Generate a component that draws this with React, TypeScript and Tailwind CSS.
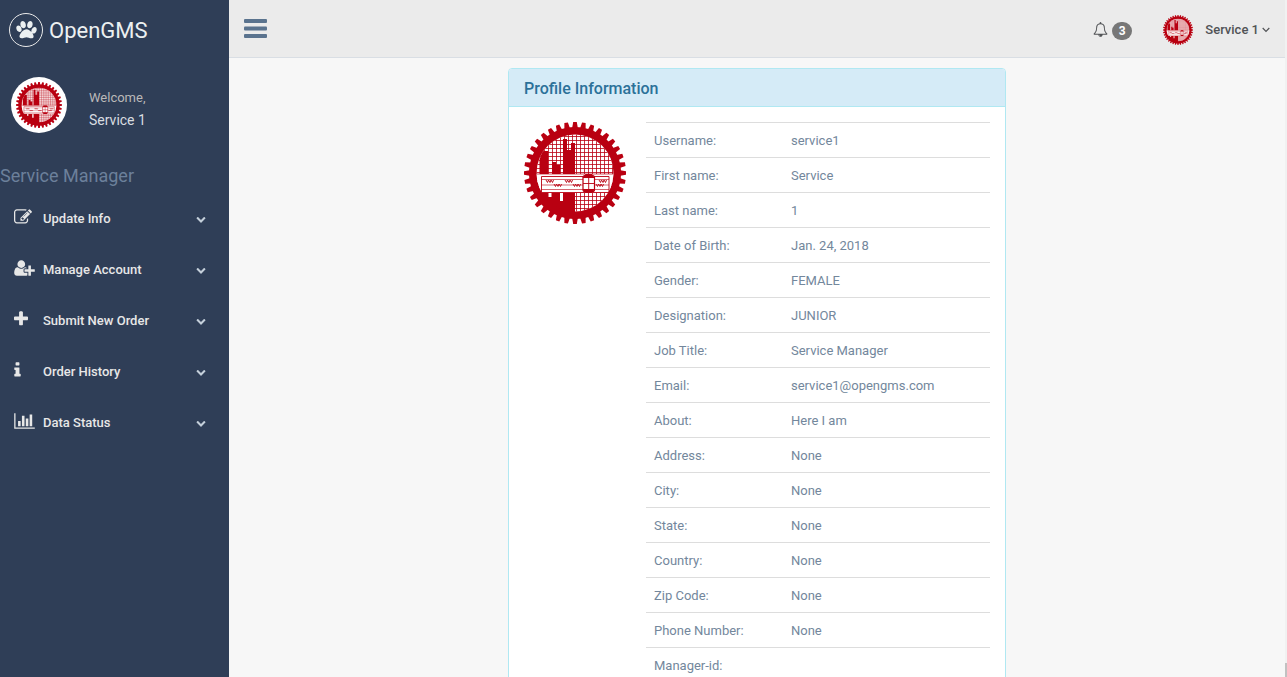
import React from "react";

type GlyphProps = { d: string; width?: number; className: string };

/* Glyphs are drawn on a 1792-unit tall grid, with a variable advance width. */
function Glyph({ d, width = 1792, className }: GlyphProps) {
  return (
    <svg viewBox={`0 0 ${width} 1792`} fill="currentColor" aria-hidden="true" className={className}>
      <path d={d} />
    </svg>
  );
}

const PAW =
  "M780 508q0 60-19 113.5t-63 92.5-105 39q-76 0-138-57.5t-92-135.5-30-151q0-60 19-113.5t63-92.5 105-39q77 0 138.5 57.5t91.5 135 30 151.5zm-342 355q0 80-42 139t-119 59q-76 0-141.5-55.5t-100.5-133.5-35-152q0-80 42-139.5t119-59.5q76 0 141.5 55.5t100.5 134 35 152.5zm394-27q118 0 255 97.5t229 237 92 254.5q0 46-17 76.5t-48.5 45-64.5 20-76 5.5q-68 0-187.5-45t-182.5-45q-66 0-192.5 44.5t-200.5 44.5q-183 0-183-146 0-86 56-191.5t139.5-192.5 187.5-146 193-59zm239-83q-61 0-105-39t-63-92.5-19-113.5q0-74 30-151.5t91.5-135 138.5-57.5q61 0 105 39t63 92.5 19 113.5q0 73-30 151t-92 135.5-138 57.5zm432-104q77 0 119 59.5t42 139.5q0 74-35 152t-100.5 133.5-141.5 55.5q-77 0-119-59t-42-139q0-74 35-152.5t100.5-134 141.5-55.5z";
const EDIT =
  "M888 1184l116-116-152-152-116 116v56h96v96h56zm440-720q-16-16-33 1l-350 350q-17 17-1 33t33-1l350-350q17-17 1-33zm80 594v190q0 119-84.5 203.5t-203.5 84.5h-832q-119 0-203.5-84.5t-84.5-203.5v-832q0-119 84.5-203.5t203.5-84.5h832q63 0 117 25 15 7 18 23 3 17-9 29l-49 49q-14 14-32 8-23-6-45-6h-832q-66 0-113 47t-47 113v832q0 66 47 113t113 47h832q66 0 113-47t47-113v-126q0-13 9-22l64-64q15-15 35-7t20 29zm-96-738l288 288-672 672h-288v-288zm444 132l-92 92-288-288 92-92q28-28 68-28t68 28l152 152q28 28 28 68t-28 68z";
const USER_PLUS =
  "M704 896q-159 0-271.5-112.5t-112.5-271.5 112.5-271.5 271.5-112.5 271.5 112.5 112.5 271.5-112.5 271.5-271.5 112.5zm960 128h352q13 0 22.5 9.5t9.5 22.5v192q0 13-9.5 22.5t-22.5 9.5h-352v352q0 13-9.5 22.5t-22.5 9.5h-192q-13 0-22.5-9.5t-9.5-22.5v-352h-352q-13 0-22.5-9.5t-9.5-22.5v-192q0-13 9.5-22.5t22.5-9.5h352v-352q0-13 9.5-22.5t22.5-9.5h192q13 0 22.5 9.5t9.5 22.5v352zm-736 224q0 52 38 90t90 38h256v238q-68 50-171 50h-874q-121 0-194-69t-73-190q0-53 3.5-103.5t14-109 26.5-108.5 43-97.5 62-81 85.5-53.5 111.5-20q19 0 39 17 79 61 154.5 91.5t164.5 30.5 164.5-30.5 154.5-91.5q20-17 39-17 132 0 217 96h-223q-52 0-90 38t-38 90v192z";
const PLUS =
  "M1408 736v192q0 40-28 68t-68 28h-416v416q0 40-28 68t-68 28h-192q-40 0-68-28t-28-68v-416h-416q-40 0-68-28t-28-68v-192q0-40 28-68t68-28h416v-416q0-40 28-68t68-28h192q40 0 68 28t28 68v416h416q40 0 68 28t28 68z";
const INFO =
  "M640 1344v128q0 26-19 45t-45 19h-512q-26 0-45-19t-19-45v-128q0-26 19-45t45-19h64v-384h-64q-26 0-45-19t-19-45v-128q0-26 19-45t45-19h384q26 0 45 19t19 45v576h64q26 0 45 19t19 45zm-128-1152v192q0 26-19 45t-45 19h-256q-26 0-45-19t-19-45v-192q0-26 19-45t45-19h256q26 0 45 19t19 45z";
const CHART =
  "M640 896v512h-256v-512h256zm384-512v1024h-256v-1024h256zm1024 1152v128h-2048v-1536h128v1408h1920zm-640-896v768h-256v-768h256zm384-384v1152h-256v-1152h256z";
const CHEVRON =
  "M1683 808l-742 741q-19 19-45 19t-45-19l-742-741q-19-19-19-45.5t19-45.5l166-165q19-19 45-19t45 19l531 531 531-531q19-19 45-19t45 19l166 165q19 19 19 45.5t-19 45.5z";
const BELL =
  "M912 1696q0-16-16-16-59 0-101.5-42.5t-42.5-101.5q0-16-16-16t-16 16q0 73 51.5 124.5t124.5 51.5q16 0 16-16zm-666-288h1300q-266-300-266-832 0-51-24-105t-69-103-121.5-80.5-169.5-31.5-169.5 31.5-121.5 80.5-69 103-24 105q0 532-266 832zm1482 0q0 52-38 90t-90 38h-448q0 106-75 181t-181 75-181-75-75-181h-448q-52 0-90-38t-38-90q50-42 91-88t85-119.5 74.5-158.5 50-206 19.5-260q0-152 117-282.5t307-158.5q-8-19-8-39 0-40 28-68t68-28 68 28 28 68q0 20-8 39 190 28 307 158.5t117 282.5q0 139 19.5 260t50 206 74.5 158.5 85 119.5 91 88z";

const TEETH = Array.from({ length: 36 }, (_, i) => i * 10);
const GRID = Array.from({ length: 20 }, (_, i) => i * 4);

/* Gear emblem: toothed ring round a grid with a skyline and a slide rule. */
function Emblem({ className }: { className: string }) {
  const id = React.useId();
  return (
    <svg viewBox="0 0 102 102" role="img" aria-label="Service 1" className={className}>
      <clipPath id={id}>
        <circle cx="51" cy="51" r="38.5" />
      </clipPath>
      <g fill="#b90011">
        <circle cx="51" cy="51" r="46" />
        {TEETH.map((a) => (
          <path key={a} d="M48 7 L49.2 0 H52.8 L54 7 Z" transform={`rotate(${a} 51 51)`} />
        ))}
      </g>
      <g clipPath={`url(#${id})`}>
        <path d="M12 12H90V90H51V71H12Z" fill="#fff" />
        <g fill="none" stroke="#b90011" strokeWidth="0.8">
          {GRID.map((p) => (
            <path key={p} d={`M${12.5 + p} 12V90M12 ${14.5 + p}H90`} />
          ))}
        </g>
        <path
          fill="#b90011"
          d="M15.500 54V36H17V29H24V52H28V40H32V43H36V52H39V17H43V28H47V21H51V54Z"
        />
        <path fill="#fff" d="M24.5 70h3v5h-3zM36 70h3v9h-3z" />
        <rect x="10" y="52" width="82" height="19" fill="#fff" />
        <path fill="none" stroke="#b90011" strokeWidth="0.7" d="M10 52H92" />
      </g>
      <g fill="none" stroke="#b90011">
        <path strokeWidth="0.9" d="M17.5 54.5H85V70.5H17.5Z" />
        <path strokeWidth="0.6" d="M17.5 57.5H85M17.5 63H85M17.5 67.500H85" />
        <path
          strokeWidth="0.9"
          d="M22 58l1.500 2.500 1-2.500 1.500 2.500 1-2.500 1.500 2.500 1-2.500M30 62l1.500 2.500 1-2.500 1.500 2.500 1-2.500 1.500 2.500 1-2.500M41 58l1.500 2.500 1-2.500 1.500 2.500 1-2.500 1.500 2.500 1-2.500M49 62l1.500 2.500 1-2.500 1.500 2.500 1-2.500 1.500 2.500 1-2.500M75 58l1.500 2.500 1-2.500 1.500 2.500 1-2.500 1.500 2.500 1-2.500M72 62l1.500 2.500 1-2.500 1.500 2.500 1-2.500 1.500 2.500 1-2.500"
        />
      </g>
      <rect x="59" y="53.500" width="11.500" height="16" rx="2" fill="#fff" stroke="#b90011" strokeWidth="1.200" />
      <path fill="#b90011" d="M58.500 56l3-4h6.500l3 4zM58.500 67l3 4h6.500l3-4z" />
      <path fill="none" stroke="#b90011" strokeWidth="0.900" d="M64.700 54V70M59 61.500H71" />
    </svg>
  );
}

const MENU = [
  { label: "Update Info", icon: EDIT, width: 1792, size: "h-[18px] w-[18px]" },
  { label: "Manage Account", icon: USER_PLUS, width: 2048, size: "h-[18px] w-[21px]" },
  { label: "Submit New Order", icon: PLUS, width: 1408, size: "h-[18px] w-[14px]" },
  { label: "Order History", icon: INFO, width: 640, size: "h-[18px] w-[7px]" },
  { label: "Data Status", icon: CHART, width: 2048, size: "h-[18px] w-[21px]" },
];

const PROFILE: [string, string][] = [
  ["Username:", "service1"],
  ["First name:", "Service"],
  ["Last name:", "1"],
  ["Date of Birth:", "Jan. 24, 2018"],
  ["Gender:", "FEMALE"],
  ["Designation:", "JUNIOR"],
  ["Job Title:", "Service Manager"],
  ["Email:", "service1@opengms.com"],
  ["About:", "Here I am"],
  ["Address:", "None"],
  ["City:", "None"],
  ["State:", "None"],
  ["Country:", "None"],
  ["Zip Code:", "None"],
  ["Phone Number:", "None"],
  ["Manager-id:", ""],
];

function Sidebar() {
  return (
    <aside className="flex w-[229px] shrink-0 flex-col bg-[#2f3e57]">
      <a href="#" className="flex h-[60px] items-center gap-[6px] pl-[9px] text-[22px] text-[#ecf0f1]">
        <span className="flex size-[34px] items-center justify-center rounded-full border border-[#eaeaea]">
          <Glyph d={PAW} width={1664} className="h-[22px] w-[21px]" />
        </span>
        OpenGMS
      </a>
      <div className="flex items-center gap-[22px] pt-[17px] pl-[11px]">
        <span className="size-[56px] rounded-full bg-white p-[5px]">
          <Emblem className="size-full" />
        </span>
        <div className="pt-[10px]">
          <div className="text-[13px] leading-[20px] text-[#bab8b8]">Welcome,</div>
          <div className="text-[14px] leading-[24px] text-[#d8dce0]">Service 1</div>
        </div>
      </div>
      <h3 className="mt-[31px] text-[18px] leading-[24px] text-[#6c809b]">Service Manager</h3>
      <nav className="mt-[5px]">
        <ul>
          {MENU.map((item) => (
            <li key={item.label}>
              <button
                type="button"
                className="flex h-[51px] w-full items-center pr-[23px] pl-[14px] text-[13px] font-medium text-[#e7e7e7]"
              >
                <span className="flex w-[29px] pb-[4px]">
                  <Glyph d={item.icon} width={item.width} className={item.size} />
                </span>
                <span className="grow text-left">{item.label}</span>
                <Glyph d={CHEVRON} className="size-[10px] text-[#c4cfda]" />
              </button>
            </li>
          ))}
        </ul>
      </nav>
    </aside>
  );
}

function TopBar() {
  return (
    <header className="flex h-[58px] shrink-0 items-center justify-between border-b border-[#d9dee4] bg-[#ebebeb] pr-[15px] pl-[15px]">
      <button type="button" aria-label="Toggle menu" className="text-[#5a738e]">
        <svg viewBox="0 0 23 19" fill="currentColor" className="h-[19px] w-[23px]">
          <rect width="23" height="4" rx="1" />
          <rect y="7.500" width="23" height="4" rx="1" />
          <rect y="15" width="23" height="4" rx="1" />
        </svg>
      </button>
      <div className="flex items-center gap-[31px] pt-[2px] text-[#515356]">
        <button type="button" aria-label="Notifications" className="flex items-center gap-1">
          <Glyph d={BELL} className="size-[15px]" />
          <span className="mt-[2px] flex h-[18px] w-[20px] items-center justify-center rounded-full bg-[#777] text-[12px] font-bold text-white">
            3
          </span>
        </button>
        <button type="button" className="flex items-center text-[13px] font-medium">
          <Emblem className="mr-3 size-[30px]" />
          Service 1
          <svg viewBox="0 0 8 6" fill="none" stroke="currentColor" strokeWidth="1.200" className="ml-[3px] h-[6px] w-[8px]">
            <path d="M0.700 1l3.300 3.300L7.300 1" />
          </svg>
        </button>
      </div>
    </header>
  );
}

export default function App() {
  return (
    <div className="flex h-screen overflow-hidden bg-[#f7f7f7] font-[Roboto,sans-serif] text-[13px] text-[#73879c]">
      <Sidebar />
      <div className="flex min-w-0 grow flex-col">
        <TopBar />
        <main className="min-h-0 grow overflow-y-auto p-[10px] [scrollbar-width:none]">
          <section className="mx-auto w-1/2 px-[10px]">
            <div className="rounded-[4px] border border-[#b0e8f2] bg-white">
              <h1 className="rounded-t-[3px] border-b border-[#b0e8f2] bg-[#d5ebf7] px-[15px] pt-[11px] pb-[8px] text-[16px] leading-[18px] font-medium text-[#2b7199]">
                Profile Information
              </h1>
              <div className="flex items-start gap-[20px] p-[15px]">
                <Emblem className="w-[102px] shrink-0" />
                <table className="w-full border-collapse">
                  <tbody>
                    {PROFILE.map(([label, value]) => (
                      <tr key={label} className="border-t border-[#ddd]">
                        <th scope="row" className="w-[137px] px-2 pt-[9px] pb-[7px] text-left leading-[18px] font-normal">
                          {label}
                        </th>
                        <td className="px-2 pt-[9px] pb-[7px] leading-[18px]">{value}</td>
                      </tr>
                    ))}
                  </tbody>
                </table>
              </div>
            </div>
          </section>
        </main>
      </div>
      <div className="flex w-[2px] shrink-0 flex-col justify-end bg-[#f1f1f1]">
        <div className="h-[14px] bg-[#c1c1c1]" />
      </div>
    </div>
  );
}
